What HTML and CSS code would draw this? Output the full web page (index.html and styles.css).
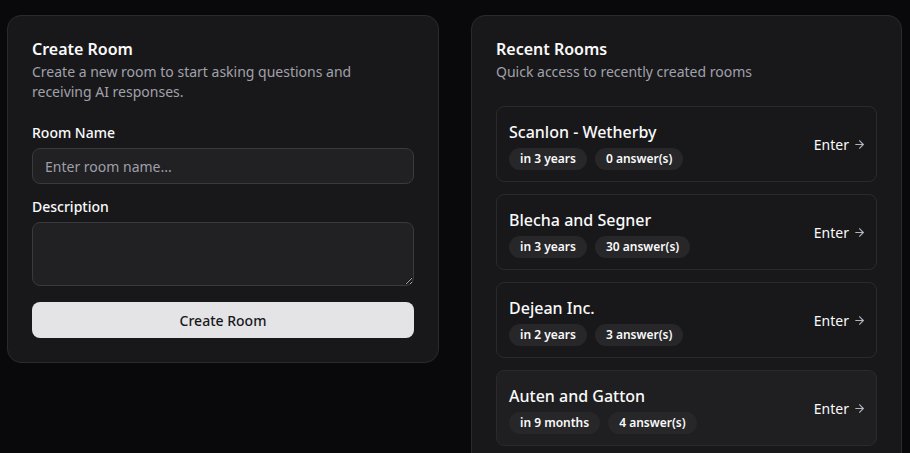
FILE: index.html
```html
<!DOCTYPE html>
<html lang="en">
<head>
<meta charset="utf-8">
<title>Rooms</title>
<link rel="stylesheet" href="styles.css">
</head>
<body>
<main class="page">
  <section class="card">
    <header class="card-header">
      <h2 class="card-title">Create Room</h2>
      <p class="card-desc">Create a new room to start asking questions and receiving AI responses.</p>
    </header>
    <form class="form">
      <div class="field">
        <label class="label" for="name">Room Name</label>
        <input class="input" id="name" type="text" placeholder="Enter room name...">
      </div>
      <div class="field">
        <label class="label" for="desc">Description</label>
        <textarea class="textarea" id="desc"></textarea>
      </div>
      <button class="btn" type="button">Create Room</button>
    </form>
  </section>

  <section class="card card-tall">
    <header class="card-header">
      <h2 class="card-title">Recent Rooms</h2>
      <p class="card-desc">Quick access to recently created rooms</p>
    </header>
    <div class="rooms">
      <a class="room">
        <div class="room-info">
          <span class="room-name">Scanlon - Wetherby</span>
          <div class="badges"><span class="badge">in 3 years</span><span class="badge">0 answer(s)</span></div>
        </div>
        <span class="enter">Enter <svg class="arrow" viewBox="0 0 24 24" width="13" height="13" fill="none" stroke="currentColor" stroke-width="2" stroke-linecap="round" stroke-linejoin="round"><path d="M5 12h14"/><path d="m12 5 7 7-7 7"/></svg></span>
      </a>
      <a class="room">
        <div class="room-info">
          <span class="room-name">Blecha and Segner</span>
          <div class="badges"><span class="badge">in 3 years</span><span class="badge">30 answer(s)</span></div>
        </div>
        <span class="enter">Enter <svg class="arrow" viewBox="0 0 24 24" width="13" height="13" fill="none" stroke="currentColor" stroke-width="2" stroke-linecap="round" stroke-linejoin="round"><path d="M5 12h14"/><path d="m12 5 7 7-7 7"/></svg></span>
      </a>
      <a class="room">
        <div class="room-info">
          <span class="room-name">Dejean Inc.</span>
          <div class="badges"><span class="badge">in 2 years</span><span class="badge">3 answer(s)</span></div>
        </div>
        <span class="enter">Enter <svg class="arrow" viewBox="0 0 24 24" width="13" height="13" fill="none" stroke="currentColor" stroke-width="2" stroke-linecap="round" stroke-linejoin="round"><path d="M5 12h14"/><path d="m12 5 7 7-7 7"/></svg></span>
      </a>
      <a class="room room-hover">
        <div class="room-info">
          <span class="room-name">Auten and Gatton</span>
          <div class="badges"><span class="badge">in 9 months</span><span class="badge">4 answer(s)</span></div>
        </div>
        <span class="enter">Enter <svg class="arrow" viewBox="0 0 24 24" width="13" height="13" fill="none" stroke="currentColor" stroke-width="2" stroke-linecap="round" stroke-linejoin="round"><path d="M5 12h14"/><path d="m12 5 7 7-7 7"/></svg></span>
      </a>
    </div>
  </section>
</main>
</body>
</html>
```

FILE: styles.css
```css
* { box-sizing: border-box; }

html, body {
  margin: 0;
  background: #09090b;
  color: #fafafa;
  font-family: "Noto Sans", "Open Sans", sans-serif;
  height: 100%;
  overflow: hidden;
}

.page {
  display: grid;
  grid-template-columns: 432px 431px;
  column-gap: 32px;
  align-items: start;
  padding: 15px 8px 0 7px;
}

.card {
  background: #18181b;
  border: 1px solid #2a2a2d;
  border-radius: 14px;
  padding: 24px 24px 24px 24px;
  display: flex;
  flex-direction: column;
  gap: 24px;
}

.card-header {
  display: flex;
  flex-direction: column;
  gap: 4px;
}

.card-title {
  margin: 0;
  font-size: 16px;
  line-height: 18px;
  font-weight: 600;
  color: #fafafa;
}

.card-desc {
  margin: 0;
  font-size: 14px;
  line-height: 20px;
  color: #a1a1aa;
}

.form {
  display: flex;
  flex-direction: column;
  gap: 16px;
}

.field {
  display: flex;
  flex-direction: column;
  gap: 8px;
}

.label {
  font-size: 14px;
  line-height: 14px;
  font-weight: 500;
  color: #fafafa;
}

.input, .textarea {
  width: 100%;
  background: #212124;
  border: 1px solid #3a3a3e;
  border-radius: 8px;
  color: #fafafa;
  font-family: inherit;
  font-size: 14px;
  padding: 0 12px;
  outline: none;
}

.input { height: 36px; }

.input::placeholder { color: #9f9fa8; }

.textarea {
  height: 64px;
  padding: 8px 12px;
  display: block;
}

.btn {
  height: 36px;
  border: 0;
  border-radius: 8px;
  background: #e4e4e7;
  color: #18181b;
  font-family: inherit;
  font-size: 14px;
  font-weight: 500;
}

.card-tall { padding-bottom: 40px; }

.rooms {
  display: flex;
  flex-direction: column;
  gap: 12px;
}

.room {
  display: flex;
  align-items: center;
  justify-content: space-between;
  border: 1px solid #2a2a2d;
  border-radius: 8px;
  padding: 11px 10px 11px 12px;
  height: 76px;
}

.room-hover { background: #1f1f22; }

.room-info {
  display: flex;
  flex-direction: column;
  gap: 4px;
  padding-top: 2px;
}

.room-name {
  font-size: 16px;
  line-height: 24px;
  font-weight: 500;
  color: #fafafa;
}

.badges {
  display: flex;
  gap: 8px;
}

.badge {
  background: #27272a;
  border-radius: 999px;
  padding: 0 11px;
  height: 22px;
  line-height: 22px;
  font-size: 12px;
  font-weight: 600;
  color: #fafafa;
}

.enter {
  display: flex;
  align-items: center;
  gap: 4px;
  font-size: 14px;
  font-weight: 400;
  color: #fafafa;
}

.arrow { color: #b4b4bb; }
```
